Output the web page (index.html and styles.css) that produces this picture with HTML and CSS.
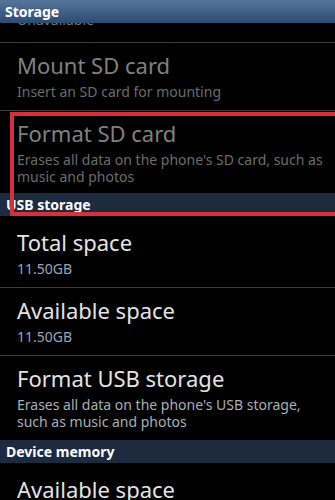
FILE: index.html
```html
<!DOCTYPE html>
<html>
<head>
    <title>Storage</title>
    <link rel="stylesheet" href="styles.css">
</head>
<body>
    <div class="screen">
        <div class="category top">Storage</div>
        <div class="peek"><span>Unavailable</span></div>
        <hr class="divider">

        <div class="pref disabled">
            <div class="title">Mount SD card</div>
            <div class="summary">Insert an SD card for mounting</div>
        </div>
        <hr class="divider">

        <div class="marked">
            <div class="pref disabled tight">
                <div class="title">Format SD card</div>
                <div class="summary">Erases all data on the phone's SD card, such as music and photos</div>
            </div>
            <div class="category">USB storage</div>
            <div class="highlight"></div>
        </div>

        <div class="pref first">
            <div class="title">Total space</div>
            <div class="summary value">11.50GB</div>
        </div>
        <hr class="divider">

        <div class="pref">
            <div class="title">Available space</div>
            <div class="summary value">11.50GB</div>
        </div>
        <hr class="divider">

        <div class="pref">
            <div class="title">Format USB storage</div>
            <div class="summary">Erases all data on the phone's USB storage, such as music and photos</div>
        </div>
        <div class="category">Device memory</div>

        <div class="pref first">
            <div class="title">Available space</div>
        </div>
    </div>
</body>
</html>
```

FILE: styles.css
```css
body {
    margin: 0;
    background-color: #000;
    font-family: "Noto Sans", "Open Sans", sans-serif;
    overflow: hidden;
}
.screen {
    width: 335px;
    height: 500px;
    overflow: hidden;
}
.category {
    height: 23px;
    line-height: 23px;
    padding-left: 6px;
    background-color: #1d2b3f;
    color: #fff;
    font-size: 14px;
    font-weight: bold;
}
.category.top {
    padding-left: 5px;
    background: linear-gradient(#55759b, #2c4c73);
}
.peek {
    height: 19px;
    overflow: hidden;
    padding-left: 17px;
}
.peek span {
    display: block;
    margin-top: -12px;
    font-size: 14px;
    line-height: 17px;
    color: #777;
}
.divider {
    margin: 0;
    border: none;
    border-top: 1px solid #3d3d3d;
}
.pref {
    padding: 7px 10px 10px 17px;
}
.pref.tight {
    padding-bottom: 8px;
}
.pref.first {
    padding-top: 11px;
}
.title {
    font-size: 22px;
    line-height: 30px;
    color: #e4e4e4;
}
.summary {
    margin-top: 3px;
    font-size: 14px;
    line-height: 17px;
    color: #a9afb8;
}
.value {
    color: #9aa6b8;
}
.disabled .title {
    color: #808080;
}
.disabled .summary {
    color: #6c6c6c;
}
.marked {
    position: relative;
}
.highlight {
    position: absolute;
    top: 1px;
    left: 10px;
    right: -4px;
    bottom: 0;
    border: 4px solid #d6303a;
}
```
